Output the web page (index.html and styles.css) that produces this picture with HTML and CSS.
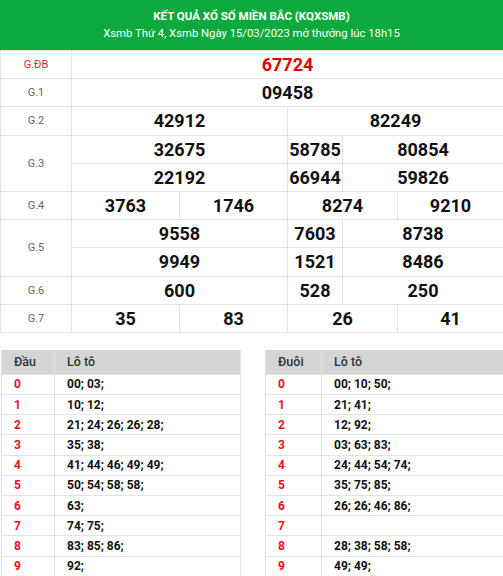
FILE: index.html
```html
<!DOCTYPE html>
<html lang="vi">
<head>
<meta charset="utf-8">
<title>KQXSMB</title>
<link rel="stylesheet" href="styles.css">
</head>
<body>
<div class="page">
  <header class="head">
    <div class="head-title">KẾT QUẢ XỔ SỐ MIỀN BẮC (KQXSMB)</div>
    <div class="head-sub">Xsmb Thứ 4, Xsmb Ngày 15/03/2023 mở thưởng lúc 18h15</div>
  </header>

  <div class="kq">
    <div class="lbl lbl-db">G.ĐB</div>
    <div class="num num-db c-all">67724</div>

    <div class="lbl">G.1</div>
    <div class="num c-all">09458</div>

    <div class="lbl">G.2</div>
    <div class="num c-a">42912</div>
    <div class="num c-r">82249</div>

    <div class="lbl span2">G.3</div>
    <div class="num c-a">32675</div>
    <div class="num c-m">58785</div>
    <div class="num c-e">80854</div>
    <div class="num c-a">22192</div>
    <div class="num c-m">66944</div>
    <div class="num c-e">59826</div>

    <div class="lbl">G.4</div>
    <div class="num">3763</div>
    <div class="num">1746</div>
    <div class="num c-q3">8274</div>
    <div class="num">9210</div>

    <div class="lbl span2">G.5</div>
    <div class="num c-a">9558</div>
    <div class="num c-m">7603</div>
    <div class="num c-e">8738</div>
    <div class="num c-a">9949</div>
    <div class="num c-m">1521</div>
    <div class="num c-e">8486</div>

    <div class="lbl">G.6</div>
    <div class="num c-a">600</div>
    <div class="num c-m">528</div>
    <div class="num c-e">250</div>

    <div class="lbl">G.7</div>
    <div class="num">35</div>
    <div class="num">83</div>
    <div class="num c-q3">26</div>
    <div class="num">41</div>
  </div>

  <div class="loto-wrap">
    <div class="loto loto-dau">
      <div class="th">Đầu</div><div class="th">Lô tô</div>
      <div class="k">0</div><div class="v">00; 03;</div>
      <div class="k">1</div><div class="v">10; 12;</div>
      <div class="k">2</div><div class="v">21; 24; 26; 26; 28;</div>
      <div class="k">3</div><div class="v">35; 38;</div>
      <div class="k">4</div><div class="v">41; 44; 46; 49; 49;</div>
      <div class="k">5</div><div class="v">50; 54; 58; 58;</div>
      <div class="k">6</div><div class="v">63;</div>
      <div class="k">7</div><div class="v">74; 75;</div>
      <div class="k">8</div><div class="v">83; 85; 86;</div>
      <div class="k">9</div><div class="v">92;</div>
    </div>
    <div class="loto loto-duoi">
      <div class="th">Đuôi</div><div class="th">Lô tô</div>
      <div class="k">0</div><div class="v">00; 10; 50;</div>
      <div class="k">1</div><div class="v">21; 41;</div>
      <div class="k">2</div><div class="v">12; 92;</div>
      <div class="k">3</div><div class="v">03; 63; 83;</div>
      <div class="k">4</div><div class="v">24; 44; 54; 74;</div>
      <div class="k">5</div><div class="v">35; 75; 85;</div>
      <div class="k">6</div><div class="v">26; 26; 46; 86;</div>
      <div class="k">7</div><div class="v"></div>
      <div class="k">8</div><div class="v">28; 38; 58; 58;</div>
      <div class="k">9</div><div class="v">49; 49;</div>
    </div>
  </div>
</div>
</body>
</html>
```

FILE: styles.css
```css
html, body {
  margin: 0;
  padding: 0;
  background: #fff;
  overflow: hidden;
}
body {
  font-family: Roboto, "Liberation Sans", Arial, sans-serif;
  color: #111;
}
.page {
  width: 503px;
  overflow: hidden;
}

.head {
  height: 50px;
  background: #0ca93d;
  color: #fff;
  display: flex;
  flex-direction: column;
  justify-content: center;
  align-items: center;
  line-height: 17px;
}
.head-title {
  font-size: 11.5px;
  font-weight: 700;
}
.head-sub {
  font-size: 11.3px;
}

.kq {
  display: grid;
  grid-template-columns: 70px 107px 107px 54px 54px 1fr;
  grid-auto-rows: 27.2px;
  gap: 1px;
  padding: 1px 0 1px 1px;
  background: #e2e2e2;
}
.lbl, .num {
  background: #fff;
  display: flex;
  align-items: center;
  justify-content: center;
}
.lbl {
  grid-column: 1;
  font-size: 11px;
  color: #666;
}
.lbl-db {
  color: #e5262e;
}
.span2 {
  grid-row: span 2;
}
.num {
  font-size: 18px;
  font-weight: 700;
  color: #111;
}
.num-db {
  color: #e00000;
}
.c-all { grid-column: 2 / 7; }
.c-a { grid-column: 2 / 4; }
.c-r { grid-column: 4 / 7; }
.c-m { grid-column: 4 / 5; }
.c-e { grid-column: 5 / 7; }
.c-q3 { grid-column: 4 / 6; }

.loto-wrap {
  display: flex;
  gap: 24px;
  margin-top: 17px;
  padding-left: 1px;
}
.loto {
  box-sizing: border-box;
  flex: 0 0 auto;
  width: 240px;
  display: grid;
  grid-template-rows: 24px;
  grid-auto-rows: 19.2px;
  gap: 1px;
  padding: 0 1px 1px 1px;
  background: #e2e2e2;
  font-size: 12px;
}
.loto-dau {
  grid-template-columns: 52px 1fr;
}
.loto-duoi {
  grid-template-columns: 55px 1fr;
  padding-right: 0;
}
.th, .k, .v {
  display: flex;
  align-items: center;
  padding-left: 12px;
}
.th {
  background: #d5d5d5;
  color: #333;
  font-weight: 500;
  font-size: 12.5px;
}
.k {
  background: #fff;
  color: #f01010;
  font-weight: 700;
}
.v {
  background: #fff;
  color: #111;
  font-weight: 700;
}
```
